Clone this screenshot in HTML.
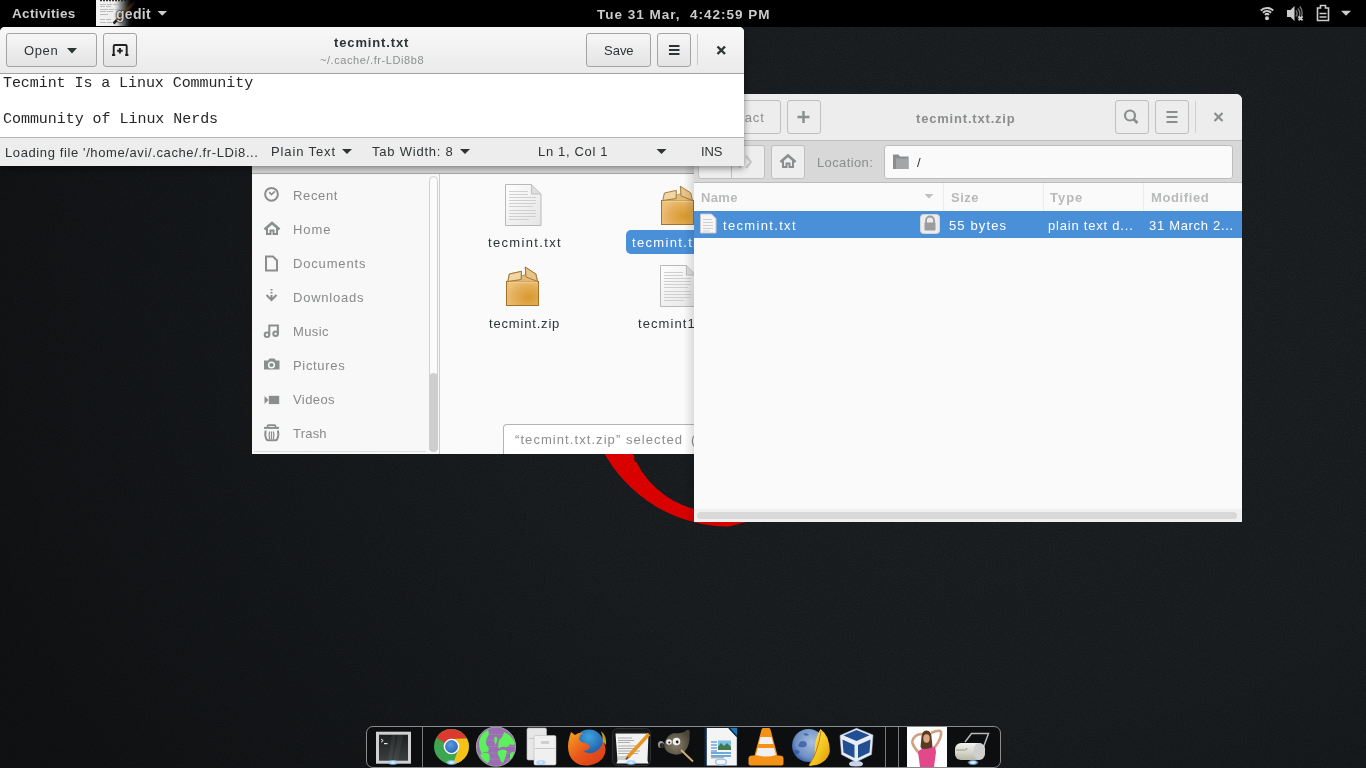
<!DOCTYPE html>
<html><head><meta charset="utf-8">
<style>
*{box-sizing:border-box;margin:0;padding:0}
html,body{width:1366px;height:768px;overflow:hidden}
body{position:relative;background:#1b1e21;font-family:"Liberation Sans",sans-serif;color:#2e3436}
.a{position:absolute}
.t{position:absolute;white-space:nowrap;line-height:1;will-change:transform}
.sh{text-shadow:0 0 1.5px #000,0 0 2px #000}
.btn{position:absolute;border:1px solid #a3a3a3;border-radius:3px;background:linear-gradient(#f6f6f6,#e4e4e4)}
.ubtn{position:absolute;border:1px solid #bfbfbf;border-radius:3px;background:#ededed}
svg{position:absolute;overflow:visible}
</style></head><body>

<!-- wallpaper -->
<div class="a" style="left:0;top:27px;width:1366px;height:741px;background:radial-gradient(ellipse 1150px 950px at 1000px 260px,#202427 0%,#1c1f22 45%,#111315 95%)"></div>
<svg style="left:0;top:27px" width="1366" height="741"><filter id="nz" x="0" y="0" width="100%" height="100%"><feTurbulence type="fractalNoise" baseFrequency="0.9" numOctaves="2" seed="3"/><feColorMatrix values="0 0 0 0 0  0 0 0 0 0  0 0 0 0 0  0 0 0 -1.6 1.1"/></filter><rect width="1366" height="741" filter="url(#nz)" opacity="0.35"/></svg>
<svg style="left:0;top:0" width="1366" height="768">
  <path d="M602.5,450 A142.9,142.9 0 0 0 729,526.5 L750,521 L716,511.5 A88.5,88.5 0 0 1 631.7,450 Z" fill="#d90000"/>
  <path d="M633,458 l6,2 l-3,3 z M640,468 l4,1 l-2,4 z M646,476 l4,1 l-1,4 z M662,490 l3,-1 l1,4 z M672,500 l6,-1 l-1,3 z" fill="#1c1f22"/>
</svg>

<!-- ================= NAUTILUS ================= -->
<div class="a" style="left:252px;top:150px;width:442px;height:304px;background:#fafafa"></div>
<div class="a" style="left:252px;top:150px;width:442px;height:24px;background:linear-gradient(#e6e6e6,#d6d6d6);border-bottom:1px solid #a8a8a8"></div>
<div class="a" style="left:252px;top:174px;width:188px;height:280px;background:#f8f8f8;border-right:1px solid #cfcfcf"></div>
<!-- sidebar scrollbar -->
<div class="a" style="left:429px;top:176px;width:9px;height:276px;border:1px solid #d0d0d0;border-radius:5px;background:#fbfbfb"></div>
<div class="a" style="left:429px;top:373px;width:9px;height:79px;border-radius:5px;background:#cecece"></div>
<div class="a" style="left:254px;top:451px;width:172px;height:1px;background:#dcdcdc"></div>
<!-- sidebar icons -->
<svg style="left:0;top:0" width="1366" height="768" fill="none" stroke="#8b8e8f" stroke-width="2">
  <circle cx="271.5" cy="194.3" r="6.4"/><path d="M269.2,192.2 l2.2,2.3 l3.4,-3.2" stroke-width="1.7"/>
  <path d="M264.5,229.5 L272,223 L279.5,229.5" stroke-width="2.6"/><path d="M267,228 v6 h3.5 v-3.5 h3 v3.5 h3.5 v-6" stroke-width="2"/>
  <path d="M266,256.5 h7 l4,4 v10 h-11 z" stroke-width="2"/>
  <path d="M271.5,289 v1.5 M271.5,292 v1.5 M271.5,295 v3.5 M266.5,295 l5,5 l5,-5" stroke-width="2"/>
  <g stroke-width="2"><circle cx="267" cy="334.8" r="2.3"/><circle cx="275.6" cy="333.8" r="2.3"/><path d="M269.3,334.5 v-9 h8.6 v8.5"/></g>
  <path d="M264,360.5 h4 l1.5,-2 h5 l1.5,2 h3.5 v9 h-15.5 z" fill="#8b8e8f" stroke="none"/><circle cx="271.5" cy="365" r="3.6" fill="#f8f8f8" stroke="none"/><circle cx="271.5" cy="365" r="2.1" fill="#8b8e8f" stroke="none"/>
  <path d="M264.5,396 v8 l4,-4 z" fill="#8b8e8f" stroke="none"/><rect x="268.8" y="395.8" width="10.4" height="8.3" fill="#8b8e8f" stroke="none"/>
  <rect x="264" y="426.9" width="15" height="2" fill="#8b8e8f" stroke="none"/><path d="M267.5,427 v-0.8 q0,-1 1,-1 h6 q1,0 1,1 v0.8" stroke-width="1.8"/><path d="M265.7,430.5 q-1.2,5 0.6,8.5 q0.6,1.3 2,1.3 h7 q1.4,0 2,-1.3 q1.8,-3.5 0.6,-8.5" stroke-width="1.9"/><path d="M269.6,431.5 q-1,3.5 0,7.5 M271.5,431.5 v7.5 M273.4,431.5 q1,3.5 0,7.5" stroke-width="1.2"/>
</svg>
<!-- content icons -->
<svg style="left:0;top:0" width="1366" height="768">
  <defs>
    <radialGradient id="box2" cx=".7" cy=".65" r=".75"><stop offset="0" stop-color="#d8992e"/><stop offset=".6" stop-color="#e4ae58"/><stop offset="1" stop-color="#eec07a"/></radialGradient>
    <linearGradient id="paper" x1="0" y1="0" x2="1" y2="1"><stop offset="0" stop-color="#ffffff"/><stop offset="1" stop-color="#e4e4e4"/></linearGradient>
  </defs>
  <g id="txticon">
    <path d="M505.5,184.5 h26 l9.5,9.5 v31.5 h-35.5 z" fill="url(#paper)" stroke="#b9b9b9"/>
    <path d="M531.5,184.5 v9.5 h9.5" fill="#ddd" stroke="#c0c0c0"/>
    <g stroke="#cfcfcf" stroke-width="1"><path d="M509,191.5h19M509,194.5h19M509,197.5h27M509,200.5h27M509,203.5h27M509,206.5h24M509,210.5h27M509,213.5h27M509,216.5h27M509,219.5h20"/></g>
  </g>
  <g id="zipicon">
    <path d="M508,281.5 L521,279.5 L521.5,276 L526,274.5 L537.5,281.5 Z" fill="#e3bb78" stroke="#b08440" stroke-width="0.6"/>
    <rect x="506.5" y="281.5" width="32" height="24" fill="url(#box2)" stroke="#a0722a" stroke-width="1"/>
    <path d="M507.5,282 h30" stroke="#f6dba8" stroke-width="1"/>
    <path d="M507.8,281.5 L509.4,274 L521.4,271.4 L521.1,279.5 Z" fill="#f0d6a4" stroke="#a0722a" stroke-width="0.9"/>
    <path d="M525.3,267.2 L535.8,274 L537.5,281.5 L526,276.9 Z" fill="#e9c488" stroke="#a0722a" stroke-width="0.9"/>
  </g>
  <use href="#zipicon" x="155" y="-81"/>
  <use href="#txticon" x="155" y="81"/>
  <use href="#zipicon" x="0" y="0"/>
</svg>
<div class="a" style="left:626px;top:230px;width:90px;height:24px;background:#4a90d9;border-radius:5px"></div>
<div class="a" style="left:503px;top:424px;width:220px;height:30px;background:#fff;border:1px solid #b4b4b4;border-bottom:none;border-radius:4px 4px 0 0"></div>
<div class="t" style="left:292.6px;top:188.9px;font-size:13.0px;letter-spacing:0.64px;color:#888a8a;">Recent</div>
<div class="t" style="left:292.6px;top:223.0px;font-size:13.0px;letter-spacing:0.90px;color:#888a8a;">Home</div>
<div class="t" style="left:292.6px;top:257.0px;font-size:13.0px;letter-spacing:0.83px;color:#888a8a;">Documents</div>
<div class="t" style="left:292.6px;top:291.0px;font-size:13.0px;letter-spacing:0.76px;color:#888a8a;">Downloads</div>
<div class="t" style="left:292.6px;top:325.0px;font-size:13.0px;letter-spacing:0.37px;color:#888a8a;">Music</div>
<div class="t" style="left:292.6px;top:359.0px;font-size:13.0px;letter-spacing:0.67px;color:#888a8a;">Pictures</div>
<div class="t" style="left:292.6px;top:393.0px;font-size:13.0px;letter-spacing:0.42px;color:#888a8a;">Videos</div>
<div class="t" style="left:292.6px;top:426.6px;font-size:13.0px;letter-spacing:0.21px;color:#888a8a;">Trash</div>
<div class="t" style="left:487.7px;top:235.6px;font-size:13.0px;letter-spacing:1.34px;color:#2e3436;">tecmint.txt</div>
<div class="t" style="left:631.9px;top:235.6px;font-size:13.0px;letter-spacing:1.34px;color:#fff;">tecmint.txt</div>
<div class="t" style="left:489.0px;top:316.6px;font-size:13.0px;letter-spacing:0.82px;color:#2e3436;">tecmint.zip</div>
<div class="t" style="left:637.7px;top:316.6px;font-size:13.0px;letter-spacing:1.07px;color:#2e3436;">tecmint1.txt</div>
<div class="t" style="left:515.4px;top:432.7px;font-size:13.0px;letter-spacing:1.07px;color:#8b8e8f;">“tecmint.txt.zip” selected</div>
<div class="t" style="left:691px;top:432.7px;font-size:13px;color:#8b8e8f">(</div>

<!-- ================= FILE ROLLER ================= -->
<div class="a" style="left:684px;top:94px;width:10px;height:428px;background:linear-gradient(90deg,rgba(0,0,0,0),rgba(0,0,0,.12))"></div>
<div class="a" style="left:694px;top:94px;width:548px;height:428px;background:#fafafa;border-radius:6px 6px 0 0;overflow:hidden">
  <div class="a" style="left:0;top:0;width:548px;height:47px;background:#ededed;border-bottom:1px solid #bdbdbd"></div>
  <div class="a" style="left:0;top:47px;width:548px;height:42px;background:#d8d8d8;border-bottom:1px solid #bdbdbd"></div>
  <div class="a" style="left:0;top:89px;width:548px;height:28px;background:#fafafa"></div>
  <div class="a" style="left:249px;top:89px;width:1px;height:28px;background:#ececec"></div>
  <div class="a" style="left:349px;top:89px;width:1px;height:28px;background:#ececec"></div>
  <div class="a" style="left:449px;top:89px;width:1px;height:28px;background:#ececec"></div>
  <div class="a" style="left:0;top:117px;width:548px;height:27px;background:#4a90d9"></div>
  <div class="a" style="left:0;top:415px;width:548px;height:13px;background:#efefef"></div>
  <div class="a" style="left:3px;top:418px;width:540px;height:7px;background:#d8d8d8;border-radius:4px"></div>
</div>
<!-- fr header buttons -->
<div class="ubtn" style="left:690px;top:100px;width:91px;height:34px"></div>
<div class="ubtn" style="left:787px;top:100px;width:34px;height:34px"></div>
<div class="ubtn" style="left:1115px;top:100px;width:34px;height:34px"></div>
<div class="ubtn" style="left:1155px;top:100px;width:34px;height:34px"></div>
<div class="a" style="left:1195px;top:101px;width:1px;height:32px;background:#d0d0d0"></div>
<!-- fr toolbar buttons -->
<div class="ubtn" style="left:698px;top:145px;width:67px;height:34px;background:#eeeeee"></div>
<div class="a" style="left:731px;top:146px;width:1px;height:32px;background:#bfbfbf"></div>
<div class="ubtn" style="left:771px;top:145px;width:34px;height:34px;background:#eeeeee"></div>
<div class="a" style="left:884px;top:145px;width:349px;height:34px;background:#fafafa;border:1px solid #bdbdbd;border-radius:3px"></div>
<svg style="left:0;top:0" width="1366" height="768" fill="none" stroke="#8b8e8f">
  <path d="M803.5,111 v12 M797.5,117 h12" stroke-width="2.5"/>
  <circle cx="1130" cy="115.5" r="5" stroke-width="2.2"/><path d="M1133.5,119 l4,4" stroke-width="2.8"/>
  <path d="M1166.5,112h11M1166.5,117h11M1166.5,122h11" stroke-width="2"/>
  <path d="M1214.5,113l8,8M1222.5,113l-8,8" stroke-width="2.2"/>
  <path d="M741,156 l-5,6 l5,6" stroke="#c8c8c8" stroke-width="2"/>
  <path d="M746,156 l5,6 l-5,6" stroke="#c8c8c8" stroke-width="2"/>
  <path d="M780.5,162 L788,155.5 L795.5,162" stroke-width="2.6"/><path d="M783,160.5 v6.5 h3.5 v-3.5 h3 v3.5 h3.5 v-6.5" stroke-width="2"/>
  <path d="M893,154.5 h5.5 l1.5,2 h8.5 v12.5 h-15.5 z" fill="#8b8e8f" stroke="none"/><path d="M896,158.5 h12.5 v10.5 h-12.5 z" fill="#a3a5a6" stroke="none"/>
  <path d="M924.5,194 h9 l-4.5,4.5 z" fill="#c0c0c0" stroke="none"/>
</svg>
<!-- row icons -->
<svg style="left:0;top:0" width="1366" height="768">
  <path d="M700.5,214 h11 l4.5,4.5 v14.5 h-15.5 z" fill="#f6f6f6" stroke="#c8c8c8"/>
  <g stroke="#cfcfcf"><path d="M703,219.5h9M703,222.5h10M703,225.5h10M703,228.5h10M703,231h7"/></g>
  <rect x="920.5" y="214.5" width="19" height="19" rx="3" fill="#ececec" stroke="#d6d6d6"/>
  <path d="M926,223 v-2.5 a4,4 0 0 1 8,0 v2.5" fill="none" stroke="#9c9c9c" stroke-width="1.8"/>
  <rect x="924.5" y="222.5" width="11" height="8" rx="1" fill="#9c9c9c"/>
</svg>
<div class="t" style="left:916.2px;top:112.0px;font-size:13.0px;font-weight:bold;letter-spacing:0.81px;color:#8b8e8f;">tecmint.txt.zip</div>
<div class="t" style="left:718.2px;top:111.0px;font-size:13.0px;letter-spacing:0.89px;color:#8b8e8f;">Extract</div>
<div class="t" style="left:816.5px;top:156.0px;font-size:13.0px;letter-spacing:0.38px;color:#8b8e8f;">Location:</div>
<div class="t" style="left:917.3px;top:156.0px;font-size:13.0px;letter-spacing:0.00px;color:#2e3436;">/</div>
<div class="t" style="left:700.8px;top:190.6px;font-size:13.0px;font-weight:bold;letter-spacing:0.33px;color:#b8baba;">Name</div>
<div class="t" style="left:950.6px;top:191.2px;font-size:13.0px;font-weight:bold;letter-spacing:0.47px;color:#b8baba;">Size</div>
<div class="t" style="left:1049.9px;top:191.2px;font-size:13.0px;font-weight:bold;letter-spacing:0.97px;color:#b8baba;">Type</div>
<div class="t" style="left:1150.5px;top:191.2px;font-size:13.0px;font-weight:bold;letter-spacing:0.61px;color:#b8baba;">Modified</div>
<div class="t" style="left:722.8px;top:218.6px;font-size:13.0px;letter-spacing:1.33px;color:#fff;">tecmint.txt</div>
<div class="t" style="left:949.3px;top:218.9px;font-size:13.0px;letter-spacing:1.12px;color:#fff;">55 bytes</div>
<div class="t" style="left:1048.3px;top:218.9px;font-size:13.0px;letter-spacing:0.79px;color:#fff;">plain text d...</div>
<div class="t" style="left:1148.9px;top:218.9px;font-size:13.0px;letter-spacing:0.69px;color:#fff;">31 March 2...</div>

<!-- ================= GEDIT ================= -->
<div class="a" style="left:0;top:27px;width:744px;height:139px;border-radius:5px 5px 0 0;box-shadow:0 2px 7px rgba(0,0,0,.45)"></div>
<div class="a" style="left:0;top:27px;width:744px;height:139px;background:#fff;border-radius:5px 5px 0 0;overflow:hidden">
  <div class="a" style="left:0;top:0;width:744px;height:47px;background:linear-gradient(#f8f8f8,#ebebeb);border-bottom:1px solid #a1a1a1"></div>
  <div class="a" style="left:0;top:110px;width:744px;height:29px;background:#ededed;border-top:1px solid #b4b4b4"></div>
</div>
<div class="btn" style="left:6px;top:33px;width:91px;height:34px"></div>
<div class="btn" style="left:103px;top:33px;width:34px;height:34px"></div>
<div class="btn" style="left:586px;top:33px;width:65px;height:34px"></div>
<div class="btn" style="left:657px;top:33px;width:34px;height:34px"></div>
<div class="a" style="left:697px;top:34px;width:1px;height:31px;background:#c8c8c8"></div>
<svg style="left:0;top:0" width="1366" height="768" fill="none" stroke="#2e3436">
  <path d="M67,48 h10 l-5,5.5 z" fill="#2e3436" stroke="none"/>
  <path d="M113.7,55.5 V46.3 Q113.7,45 115,45 H125.4 Q126.7,45 126.7,46.3 V55.5" stroke-width="1.9" stroke="#222"/><path d="M112,55 h3.2 M125.2,55 h3.2" stroke-width="1.8" stroke="#222"/>
  <path d="M119.9,48 v5.6 M117.1,50.8 h5.6" stroke-width="2" stroke="#222"/>
  <path d="M669,46h10.5M669,50h10.5M669,54h10.5" stroke-width="2"/>
  <path d="M717.5,46.5l7.5,7.5M725,46.5l-7.5,7.5" stroke-width="2.4"/>
  <path d="M342,149 h10 l-5,5 z" fill="#2e3436" stroke="none"/>
  <path d="M460,149 h10 l-5,5 z" fill="#2e3436" stroke="none"/>
  <path d="M656.5,149 h10 l-5,5 z" fill="#2e3436" stroke="none"/>
</svg>
<div class="t" style="left:334.3px;top:35.7px;font-size:13.0px;font-weight:bold;letter-spacing:0.87px;color:#2e3436;">tecmint.txt</div>
<div class="t" style="left:319.8px;top:55.2px;font-size:11.0px;letter-spacing:0.57px;color:#8b8e8f;">~/.cache/.fr-LDi8b8</div>
<div class="t" style="left:23.6px;top:43.9px;font-size:13.0px;letter-spacing:0.64px;color:#2e3436;">Open</div>
<div class="t" style="left:603.6px;top:43.6px;font-size:13.0px;letter-spacing:-0.01px;color:#2e3436;">Save</div>
<div class="t" style="left:3.0px;top:76.3px;font-size:15.0px;font-family:'Liberation Mono',monospace;letter-spacing:-0.07px;color:#262626;">Tecmint Is a Linux Community</div>
<div class="t" style="left:3.0px;top:112.3px;font-size:15.0px;font-family:'Liberation Mono',monospace;letter-spacing:-0.04px;color:#262626;">Community of Linux Nerds</div>
<div class="t" style="left:5.0px;top:146.0px;font-size:13.0px;letter-spacing:0.61px;color:#2e3436;">Loading file '/home/avi/.cache/.fr-LDi8...</div>
<div class="t" style="left:271.1px;top:144.9px;font-size:13.0px;letter-spacing:0.88px;color:#2e3436;">Plain Text</div>
<div class="t" style="left:372.3px;top:144.9px;font-size:13.0px;letter-spacing:0.78px;color:#2e3436;">Tab Width: 8</div>
<div class="t" style="left:538.0px;top:144.9px;font-size:13.0px;letter-spacing:0.66px;color:#2e3436;">Ln 1, Col 1</div>
<div class="t" style="left:700.7px;top:144.9px;font-size:13.0px;letter-spacing:-0.17px;color:#2e3436;">INS</div>

<!-- ================= TOP BAR ================= -->
<div class="a" style="left:0;top:0;width:1366px;height:27px;background:#000"></div>
<div class="a" style="left:96px;top:0;width:36px;height:26px;background:linear-gradient(90deg,#f4f4f4 0%,#ececec 50%,#888 78%,#000 100%)"></div>
<svg style="left:0;top:0" width="1366" height="768">
  <path d="M100,0.5h2M103,0.5h2M106,0.5h2M109,0.5h2M112,0.5h2M115,0.5h2M118,0.5h2M121,0.5h2M124,0.5h2" stroke="#333" stroke-width="1.4"/>
  <g stroke="#b4b4b4" stroke-width="0.9"><path d="M100,4.5h6M107,4.5h5M113,4.5h7M100,6.5h5M106,6.5h5M100,9.5h8M109,9.5h5M115,9.5h6M100,11.5h6M107,11.5h6M100,14.5h8M100,19.5h5M106,19.5h5M100,22.5h6M107,22.5h5"/></g>
  <path d="M116,21 L136,1" stroke="#9a6428" stroke-width="3"/><path d="M113.5,23.5 L116.5,20.5" stroke="#222" stroke-width="2.5"/>
</svg>
<div class="a" style="left:96px;top:0;width:42px;height:26px;background:linear-gradient(90deg,rgba(0,0,0,0) 0%,rgba(0,0,0,0) 50%,rgba(0,0,0,.5) 75%,#000 95%)"></div>
<svg style="left:0;top:0" width="1366" height="768">
  <path d="M157.5,11 h9.5 l-4.75,4.7 z" fill="#ccc"/>
  <g fill="none" stroke="#ccc" stroke-width="2">
    <path d="M1260.8,10.5 A9,9 0 0 1 1273.2,10.5"/><path d="M1262.9,12.7 A6,6 0 0 1 1271.1,12.7"/><path d="M1264.9,14.9 A3,3 0 0 1 1269.1,14.9"/>
  </g>
  <circle cx="1267" cy="18.2" r="2" fill="#ccc"/>
  <path d="M1287,10 h3.5 l4,-4 v15 l-4,-4 h-3.5 z" fill="#ccc"/>
  <g fill="none" stroke="#777" stroke-width="1.4"><path d="M1295.8,10.5 a4,4 0 0 1 0,6"/><path d="M1297.8,8.5 a7,7 0 0 1 0,10"/><path d="M1299.8,6.5 a10,10 0 0 1 0,13"/></g>
  <path d="M1298.6,16.4 l4,4 M1302.6,16.4 l-4,4" stroke="#ccc" stroke-width="1.8"/>
  <path d="M1317.5,8 h3 v-2.5 h5 v2.5 h3 v12.5 h-11 z" fill="none" stroke="#ccc" stroke-width="1.6"/>
  <path d="M1319.5,13.5 h7 M1319.5,17 h7" stroke="#ccc" stroke-width="1.6"/>
  <path d="M1341,10.8 h10 l-5,5 z" fill="#ccc"/>
</svg>
<div class="t" style="left:12.4px;top:7.3px;font-size:13.5px;font-weight:bold;letter-spacing:0.37px;color:#ccc;">Activities</div>
<div class="t" style="left:116.0px;top:6.9px;font-size:14.0px;font-weight:bold;letter-spacing:0.28px;color:#ccc;text-shadow:0 0 1.5px #000,0 0 2px #000">gedit</div>
<div class="t" style="left:596.7px;top:7.6px;font-size:13.5px;font-weight:bold;letter-spacing:1.00px;color:#ccc;">Tue 31 Mar, &nbsp;4:42:59 PM</div>

<!-- ================= DOCK ================= -->
<div class="a" style="left:366px;top:726px;width:635px;height:42px;background:#0d0e10;border:1px solid #8c8c8c;border-radius:7px 7px 7px 7px"></div>
<div class="a" style="left:422px;top:727px;width:1px;height:40px;background:#7a7a7a"></div>
<div class="a" style="left:885px;top:727px;width:1px;height:40px;background:#7a7a7a"></div>
<div class="a" style="left:898px;top:727px;width:1px;height:40px;background:#7a7a7a"></div>
<svg style="left:0;top:0" width="1366" height="768">
  <defs>
    <radialGradient id="glow"><stop offset="0" stop-color="#ffffff"/><stop offset=".5" stop-color="#9fd0ff"/><stop offset="1" stop-color="#9fd0ff" stop-opacity="0"/></radialGradient>
  </defs>
  <defs>
    <linearGradient id="termscr" x1="0" y1="0" x2="0" y2="1"><stop offset="0" stop-color="#1e2121"/><stop offset="1" stop-color="#3a3e3e"/></linearGradient>
    <radialGradient id="chromeblue" cx=".4" cy=".35" r=".7"><stop offset="0" stop-color="#5d9be0"/><stop offset="1" stop-color="#2a66b8"/></radialGradient>
    <radialGradient id="ffblue" cx=".5" cy=".25" r=".8"><stop offset="0" stop-color="#3aa3e0"/><stop offset="1" stop-color="#1b3f8c"/></radialGradient>
    <linearGradient id="ffor" x1="0" y1="0" x2="1" y2="1"><stop offset="0" stop-color="#f6a320"/><stop offset=".5" stop-color="#e8561c"/><stop offset="1" stop-color="#d63a1a"/></linearGradient>
    <radialGradient id="gimpg" cx=".45" cy=".6" r=".6"><stop offset="0" stop-color="#8a8068"/><stop offset="1" stop-color="#4a463a"/></radialGradient>
    <radialGradient id="globeg" cx=".6" cy=".4" r=".7"><stop offset="0" stop-color="#a8c0dc"/><stop offset=".7" stop-color="#6d8fc4"/><stop offset="1" stop-color="#2a4ea0"/></radialGradient>
    <linearGradient id="feath" x1="0" y1="0" x2="1" y2="1"><stop offset="0" stop-color="#fff070"/><stop offset=".6" stop-color="#f2c21a"/><stop offset="1" stop-color="#d89010"/></linearGradient>
    <linearGradient id="roll" x1="0" y1="0" x2="0" y2="1"><stop offset="0" stop-color="#f2f2f0"/><stop offset=".5" stop-color="#d8d8cc"/><stop offset="1" stop-color="#b8b8a8"/></linearGradient>
  </defs>
  <!-- terminal -->
  <rect x="376" y="731.7" width="35" height="32" fill="#d0d0d0"/>
  <rect x="379" y="734.7" width="29" height="26" fill="url(#termscr)"/>
  <path d="M392,735 l-4,25 h4 l4,-25 z M398,735 l-5,25 h5 l5,-25 z" fill="#fff" opacity=".06"/>
  <path d="M381,739 l2.2,1.6 l-2.2,1.6" stroke="#e8e8e8" stroke-width="1" fill="none"/><path d="M384,743.6 h3.5" stroke="#e8e8e8" stroke-width="1.2"/>
  <!-- chrome -->
  <circle cx="451.5" cy="746.5" r="17.5" fill="#3ea650"/>
  <path d="M451.5,746.5 m-6.5,-3.5 L436.4,737.7 A17.5,17.5 0 0 1 466.9,738.4 L451.5,739 Z" fill="#db3b2f"/>
  <path d="M451.5,739 L466.9,738.4 A17.5,17.5 0 0 1 453,764 L458,750 Z" fill="#f6c21a"/>
  <circle cx="451.5" cy="746.5" r="7.8" fill="#fff"/><circle cx="451.5" cy="746.5" r="6.4" fill="url(#chromeblue)"/>
  <!-- tor -->
  <circle cx="496" cy="746.6" r="19.5" fill="#9c6cb8" stroke="#9a9a9a" stroke-width="1.2"/>
  <g stroke="#8f8f8f" stroke-width="1" fill="none"><path d="M482,734.5 h28 M478.5,740 h35 M477,746.5 h38 M478,753 h36 M481.5,759 h29"/></g>
  <path d="M479,742 q1,-8 9,-12 q2,4 -1,8 q-2,4 0,8 q3,2 1,6 q-4,-1 -6,2 q-3,-5 -3,-12 z" fill="#5cf05c"/>
  <path d="M494.5,737 q3,-1 3,2 q-1,4 -2,6 q-2,-4 -1,-8 z" fill="#5cf05c"/>
  <path d="M504,732 q8,3 11,12 q-3,2 -5,0 q-2,4 -5,3 q-4,-1 -6,2 q-2,-6 1,-10 q3,-2 4,-7 z" fill="#5cf05c"/>
  <path d="M480,755 q5,-4 9,-1 q2,5 -1,9 q-5,-2 -8,-8 z" fill="#5cf05c"/>
  <path d="M498,751 q5,-3 9,0 q-1,6 -4,12 q-3,-1 -3,-5 q-3,-3 -2,-7 z" fill="#5cf05c"/>
  <path d="M510,754 q2,-3 4,-2 q-1,5 -4,8 z" fill="#5cf05c"/>
  <!-- files -->
  <rect x="527" y="728" width="19.5" height="32" rx="1.5" fill="#e6e6e6" stroke="#bdbdbd" stroke-width=".6"/>
  <rect x="529" y="738" width="15" height="1" fill="#c8c8c8"/>
  <rect x="534" y="735.5" width="22" height="29.5" rx="1.5" fill="#f0f0f0" stroke="#bdbdbd" stroke-width=".6"/>
  <rect x="535" y="748" width="20" height="1" fill="#c8c8c8"/>
  <rect x="541" y="741" width="8" height="3" fill="#cfcfcf"/>
  <!-- firefox -->
  <circle cx="589" cy="744.5" r="15" fill="url(#ffblue)"/>
  <path d="M569.5,737 l1.5,-5 l4,3 q4,-3 8,-2 q-4,2 -4,6 q1,3 5,4 q5,0 6,4 q-2,4 -7,4 q6,4 12,1 q6,-3 8,-10 q3,3 2.5,9 q-1.5,12 -17,14.5 q-14,1 -19,-10.5 q-3,-8 0,-18 z" fill="url(#ffor)"/>
  <path d="M601,731 q6,5 5,14 l-3,-3 q0,-6 -2,-11 z" fill="#f6c21a" opacity=".8"/>
  <!-- gedit highlight -->
  <rect x="612.5" y="728.5" width="38" height="37" rx="5" fill="#15171a" stroke="#2c2e31"/>
  <path d="M615.5,733.5 h33 l-1,27 l1,3 h-32 l1,-3 z" fill="#f2f2f2"/>
  <path d="M617,732.5 h30" stroke="#333" stroke-width="1.6" stroke-dasharray="1.2,1.5"/>
  <path d="M618,738h14M618,740.5h16M618,742.5h12M618,746h22M618,748.5h20M618,751h22M618,753.5h20M618,757h12M618,759h8" stroke="#999" stroke-width=".8"/>
  <path d="M627.5,757.5 L649,734" stroke="#e8951e" stroke-width="3.4"/><path d="M626,759.5 l2,-2.5" stroke="#555" stroke-width="2"/>
  <!-- gimp -->
  <path d="M664,745 q2,-10 10,-12 q8,1 13,-3 q3,-1 2.5,3 q1,12 -5,19 q-6,4 -12,2 q-8,-2 -8.5,-9 z" fill="url(#gimpg)"/>
  <ellipse cx="661" cy="744.5" rx="3" ry="3.5" fill="#9a9a9a"/><ellipse cx="662" cy="745.5" rx="2.3" ry="2.6" fill="#2a2a2a"/>
  <circle cx="669" cy="742" r="2.8" fill="#eee"/><circle cx="676.5" cy="741.5" r="3.8" fill="#f2f2f2"/>
  <circle cx="669.3" cy="742.5" r="1.1" fill="#222"/><circle cx="677.2" cy="742" r="1.4" fill="#222"/>
  <path d="M681,750 L693,761.5" stroke="#d8b070" stroke-width="1.8"/>
  <!-- writer -->
  <rect x="704.5" y="727.5" width="33" height="38.5" fill="#0a2a45"/>
  <path d="M706.8,728 h22.5 l7.5,8 v29.5 h-30 z" fill="#f4f4f4"/>
  <path d="M728.5,728 h8.5 v9 z" fill="#1d78b8"/>
  <path d="M729,728 l8,8.5" stroke="#0a2a45" stroke-width="1.5"/>
  <path d="M711,742h6M711,745h6M711,748h6M711,751h6" stroke="#6ca8d8" stroke-width="1.6"/>
  <rect x="718" y="740.5" width="13" height="9.5" fill="#7cc0e8"/><path d="M718,747 l3,-4 l3,3 l3,-3 l4,4 v3 h-13 z" fill="#3d7a50"/>
  <path d="M711,753h20M711,756h20" stroke="#6ca8d8" stroke-width="1.8"/><path d="M711,757.8h13" stroke="#555" stroke-width=".6"/>
  <!-- vlc -->
  <path d="M763,728 h6 q1,0 1.5,1.5 l7,26 h2 q4,0 4,3 v5 q0,2 -2,2 h-31 q-2,0 -2,-2 v-5 q0,-3 4,-3 h2 l7,-26 q0.5,-1.5 1.5,-1.5 z" fill="#f39217"/>
  <path d="M760.5,737 h11 l1.8,7 h-14.6 z" fill="#f0f0f0"/><path d="M757.8,748 h16.4 l1.8,7 q-10,3 -20,0 z" fill="#f0f0f0"/>
  <!-- globe feather -->
  <circle cx="808.5" cy="745.5" r="16.5" fill="url(#globeg)"/>
  <path d="M800,742 q3,-2 6,0 q2,3 -1,5 q-4,1 -7,-1 z M794,750 q4,-1 6,2 q-2,3 -5,2 z M803,734 q4,-2 6,1 q-3,2 -6,-1 z" fill="#3050a0" opacity=".7"/>
  <path d="M809,765.5 q2,-6 6,-10 q-2,-14 5.5,-26.5 q4,3 7,9 q3,9 2,15 q-3,9 -13,12 q-3,0 -6,1 z" fill="url(#feath)"/>
  <path d="M809,765.5 Q818,752 821,731" stroke="#c07010" stroke-width=".9" fill="none"/>
  <!-- vbox -->
  <path d="M856,761 q-7,0 -7,3 q0,2.5 7,2.5 q7,0 7,-2.5 q0,-3 -7,-3 z" fill="#c8d4ec"/>
  <path d="M840,735.5 L856.5,728.3 L873,735 L871.5,754.5 L856,762 L841.5,754.5 Z" fill="#e8ecf6" stroke="#b0bcd8" stroke-width=".6"/>
  <path d="M843.5,735.5 L856.5,730 L869.5,735.2 L856.5,741 Z" fill="#214f92"/>
  <path d="M842.5,739.5 L854.5,745 L854.5,758 L843.5,752.5 Z" fill="#214f92"/>
  <path d="M858,745 L870.5,739.5 L869.5,752.5 L858,758 Z" fill="#214f92"/>
  <!-- photo -->
  <rect x="907" y="727" width="40" height="40" fill="#fdfdfd"/>
  <path d="M921.5,737 q0,-6 5,-6.5 q5,0.5 5,6.5 l1,10 l-3,4 h-6 l-3,-4 z" fill="#5a3a22"/>
  <ellipse cx="926.5" cy="738.5" rx="3.2" ry="4.2" fill="#d9a888"/>
  <path d="M912,742 q2,6 8,12 M922,734 q-8,0 -10,8" stroke="#d0a080" stroke-width="2.6" fill="none"/>
  <path d="M941,731 q1,7 -6,16 M931,733 q6,-3 10,-2" stroke="#d0a080" stroke-width="2.6" fill="none"/>
  <path d="M918,752 q3,-4 8,-3 q6,-1 9,-3 l1,6 l-2,15 h-14 l-1,-8 z" fill="#e2488a"/>
  <!-- roller -->
  <path d="M965,742 L971.5,733.5 H988.5 L980.5,755" stroke="#b8b8b8" stroke-width="1.5" fill="none"/>
  <rect x="955" y="743" width="30" height="17" rx="6" fill="url(#roll)"/>
  <ellipse cx="979" cy="751.5" rx="5.5" ry="8.5" fill="#cfcfcf"/>
  <path d="M956,750 h9 q2,0 2,-2" stroke="#9a9a90" stroke-width="1" fill="none"/>
  <!-- glows -->
  <ellipse cx="393" cy="762.5" rx="6" ry="3" fill="url(#glow)"/>
  <ellipse cx="451.5" cy="762.5" rx="6" ry="3" fill="url(#glow)"/>
  <ellipse cx="541" cy="762.5" rx="6" ry="3" fill="url(#glow)"/>
  <ellipse cx="631" cy="762.5" rx="6" ry="3" fill="url(#glow)"/>
  <ellipse cx="973" cy="762.5" rx="6" ry="3" fill="url(#glow)"/>
  <ellipse cx="721" cy="762" rx="5.5" ry="2.8" fill="none" stroke="#9cc4ec" stroke-width="1.2"/>
</svg>

</body></html>
